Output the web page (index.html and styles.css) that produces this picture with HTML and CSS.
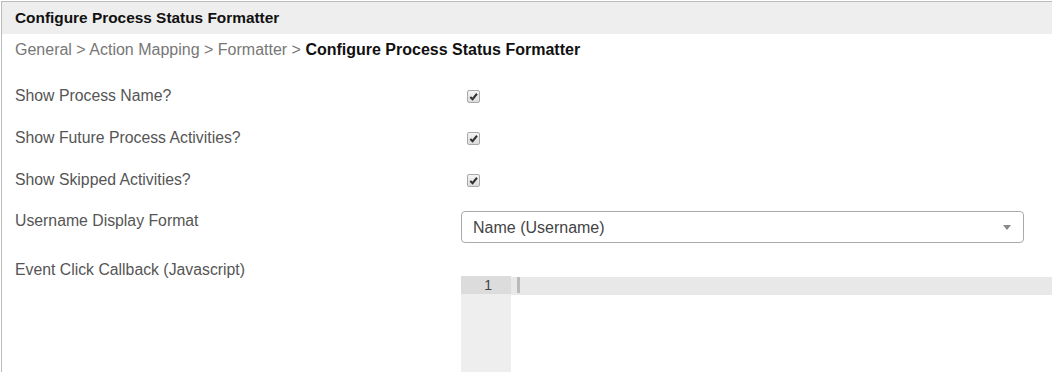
FILE: index.html
```html
<!DOCTYPE html>
<html lang="en">
<head>
    <meta charset="UTF-8">
    <title>Configure Process Status Formatter</title>
    <link rel="stylesheet" href="styles.css">
</head>
<body>
<div class="panel">
    <!-- Panel title -->
    <div class="panel-title">Configure Process Status Formatter</div>

    <!-- Breadcrumb -->
    <div class="breadcrumb">
        General &gt; Action Mapping &gt; Formatter &gt; <strong>Configure Process Status Formatter</strong>
    </div>

    <!-- Form rows -->
    <div class="form-row check-row">
        <label class="form-label">Show Process Name?</label>
        <div class="form-control"><span class="checkbox checked"><svg viewBox="0 0 12 12"><path d="M2.5 6.5 L5 9 L9.8 3" /></svg></span></div>
    </div>

    <div class="form-row check-row">
        <label class="form-label">Show Future Process Activities?</label>
        <div class="form-control"><span class="checkbox checked"><svg viewBox="0 0 12 12"><path d="M2.5 6.5 L5 9 L9.8 3" /></svg></span></div>
    </div>

    <div class="form-row check-row">
        <label class="form-label">Show Skipped Activities?</label>
        <div class="form-control"><span class="checkbox checked"><svg viewBox="0 0 12 12"><path d="M2.5 6.5 L5 9 L9.8 3" /></svg></span></div>
    </div>

    <div class="form-row select-row">
        <label class="form-label">Username Display Format</label>
        <div class="form-control">
            <div class="select">
                <span class="select-value">Name (Username)</span>
                <span class="select-arrow"></span>
            </div>
        </div>
    </div>

    <div class="form-row editor-row">
        <label class="form-label">Event Click Callback (Javascript)</label>
        <div class="form-control">
            <div class="code-editor">
                <div class="gutter">
                    <div class="line-number active">1</div>
                </div>
                <div class="code-lines">
                    <div class="code-line active"><span class="cursor"></span></div>
                </div>
            </div>
        </div>
    </div>
</div>
</body>
</html>
```

FILE: styles.css
```css
/* Page basics */
body {
    margin: 0;
    font-family: "Liberation Sans", Arial, sans-serif;
    font-size: 15.8px;
    color: #555;
    background: #fff;
    overflow: hidden;
}

/* Outer panel with the thin grey frame */
.panel {
    margin: 1px 0 0 1px;
    border-top: 1px solid #bbb;
    border-left: 1px solid #bbb;
    height: 370px;
}

.panel-title {
    background: #eeeeee;
    height: 32px;
    line-height: 32px;
    padding: 0 13px;
    font-size: 15.4px;
    font-weight: bold;
    color: #111;
}

.breadcrumb {
    padding: 6px 13px 0;
    line-height: 20px;
    font-size: 16px;
    color: #777;
    margin-bottom: 26px;
}

.breadcrumb strong {
    color: #111;
}

/* Form layout */
.form-row {
    display: grid;
    grid-template-columns: 446px 1fr;
    padding-left: 13px;
}

.form-label {
    line-height: 20px;
}

.check-row {
    margin-bottom: 22px;
}

.check-row + .check-row + .check-row {
    margin-bottom: 21px;
}

.select-row {
    margin-bottom: 17px;
}

/* Old style checkbox */
.checkbox {
    display: block;
    width: 11px;
    height: 11px;
    margin: 4px 0 0 6px;
    border: 1px solid #a9a9a9;
    border-radius: 2px;
    background: linear-gradient(#f4f4f4, #dcdcdc);
}

.checkbox svg {
    display: block;
    width: 11px;
    height: 11px;
}

.checkbox path {
    fill: none;
    stroke: #333;
    stroke-width: 2.2;
}

/* Select box */
.select-row .form-control {
    padding-right: 28px;
}

.select {
    position: relative;
    height: 30px;
    border: 1px solid #aaa;
    border-radius: 4px;
    background: #fff;
    line-height: 31px;
    padding-left: 11px;
    font-size: 16px;
    color: #444;
}

.select-arrow {
    position: absolute;
    right: 12px;
    top: 13px;
    border-left: 4px solid transparent;
    border-right: 4px solid transparent;
    border-top: 5px solid #888;
}

/* Code editor */
.code-editor {
    margin-top: 16px;
    display: flex;
    height: 100px;
}

.gutter {
    width: 50px;
    background: #eeeeee;
}

.line-number {
    height: 18px;
    line-height: 18px;
    text-align: right;
    padding-right: 19px;
    font-size: 14px;
    color: #444;
}

.line-number.active {
    background: #dcdcdc;
}

.code-lines {
    flex: 1;
    padding-left: 4px;
}

.code-line {
    height: 18px;
    margin-left: -4px;
    padding-left: 6px;
}

.code-line.active {
    background: #e8e8e8;
}

.cursor {
    display: block;
    width: 3px;
    height: 16px;
    margin-top: 1px;
    background: #bbb;
}
```
